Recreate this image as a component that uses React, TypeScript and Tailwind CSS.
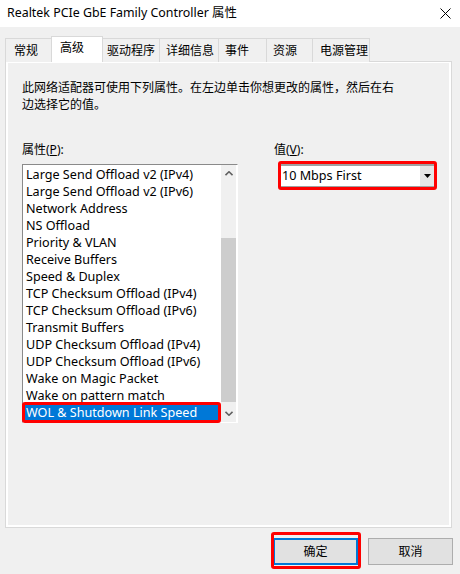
const properties = [
  "Large Send Offload v2 (IPv4)",
  "Large Send Offload v2 (IPv6)",
  "Network Address",
  "NS Offload",
  "Priority & VLAN",
  "Receive Buffers",
  "Speed & Duplex",
  "TCP Checksum Offload (IPv4)",
  "TCP Checksum Offload (IPv6)",
  "Transmit Buffers",
  "UDP Checksum Offload (IPv4)",
  "UDP Checksum Offload (IPv6)",
  "Wake on Magic Packet",
  "Wake on pattern match",
  "WOL & Shutdown Link Speed",
];

const tabs = [
  { label: "常规", w: "w-[48px]", pl: "pl-[8px]" },
  { label: "高级", w: "w-[52px]", pl: "pl-[8px]", active: true },
  { label: "驱动程序", w: "w-[58px]", pl: "pl-[4px]" },
  { label: "详细信息", w: "w-[60px]", pl: "pl-[6px]" },
  { label: "事件", w: "w-[49px]", pl: "pl-[6px]" },
  { label: "资源", w: "w-[47px]", pl: "pl-[6px]" },
  { label: "电源管理", w: "w-[58px]", pl: "pl-[7px]" },
];

const Chevron = ({ down }: { down?: boolean }) => (
  <svg width="8" height="5" viewBox="0 0 8 5">
    <path
      d={down ? "M0.5 0.8L4 4.2L7.5 0.8" : "M0.5 4.2L4 0.8L7.5 4.2"}
      fill="none"
      stroke="#606060"
      strokeWidth="1.6"
    />
  </svg>
);

export default function App() {
  return (
    <div className="w-[460px] h-[574px] bg-[#f0f0f0] flex flex-col overflow-hidden text-black font-['Segoe_UI','Noto_Sans','Noto_Sans_CJK_SC',sans-serif]">
      {/* Title bar */}
      <div className="h-[27px] shrink-0 bg-white flex items-center justify-between pl-[7px] pr-[9px] pb-[1px]">
        <span className="text-[12.4px]">Realtek PCIe GbE Family Controller 属性</span>
        <svg width="11" height="11" viewBox="0 0 11 11">
          <path d="M0.5 0.5L10.5 10.5M10.5 0.5L0.5 10.5" stroke="#000" strokeWidth="1" />
        </svg>
      </div>

      {/* Tabs */}
      <div className="flex items-end h-[26px] mt-[9px] pl-[5px] relative z-10 text-[12px]">
        {tabs.map((t) =>
          t.active ? (
            <div
              key={t.label}
              className={`${t.w} ${t.pl} h-[26px] -mx-[1px] bg-white border border-b-0 border-[#d9d9d9] flex items-center pb-[3px]`}
            >
              {t.label}
            </div>
          ) : (
            <div
              key={t.label}
              className={`${t.w} ${t.pl} h-[24px] -mr-px bg-[#f0f0f0] border border-b-0 border-[#d9d9d9] flex items-center`}
            >
              {t.label}
            </div>
          )
        )}
      </div>

      {/* Tab page */}
      <div className="w-[447px] h-[467px] ml-[5px] -mt-px border border-[#d9d9d9] shrink-0">
        <div className="h-full border-t border-x-2 border-b-2 border-white pl-[14px] pt-[16px] text-[12px]">
          <p className="leading-[17px]">
            此网络适配器可使用下列属性。在左边单击你想更改的属性，然后在右
            <br />
            边选择它的值。
          </p>

          <div className="flex mt-[28px]">
            {/* Property list */}
            <div className="w-[216px]">
              <div className="leading-[17px]">
                属性(<span className="underline">P</span>):
              </div>
              <div className="mt-[6px] h-[259px] flex border-t border-l border-[#8a8a8a] border-r border-b border-r-white border-b-white bg-white">
                <div className="w-[198px] pt-[1px] text-[12.6px]">
                  {properties.map((p, i) =>
                    i === properties.length - 1 ? (
                      <div key={p} className="relative ml-[1px] mr-[2px] h-[17px] leading-[17px] pl-[2px] bg-[#0078d7] text-white whitespace-nowrap">
                        {p}
                        <div className="absolute -left-[2px] -right-[2px] -top-[2px] -bottom-[2px] border-[3px] border-[#ff0000] rounded-[3px]" />
                      </div>
                    ) : (
                      <div key={p} className="ml-[1px] mr-[2px] h-[17px] leading-[17px] pl-[2px] whitespace-nowrap">
                        {p}
                      </div>
                    )
                  )}
                </div>
                <div className="w-[15px] bg-[#f0f0f0] flex flex-col">
                  <div className="h-[17px] flex items-center justify-center">
                    <Chevron />
                  </div>
                  <div className="flex-1 flex flex-col">
                    <div className="h-[56px]" />
                    <div className="h-[164px] bg-[#cdcdcd]" />
                  </div>
                  <div className="h-[17px] flex items-center justify-center">
                    <Chevron down />
                  </div>
                </div>
              </div>
            </div>

            {/* Value */}
            <div className="ml-[36px]">
              <div className="leading-[17px]">
                值(<span className="underline">V</span>):
              </div>
              <div className="mt-[3px] ml-[4px] w-[159px] h-[29px] border-[3px] border-[#ff0000] rounded-[3px]">
                <div className="h-full flex bg-white border-t-2 border-b border-[#a0a0a0]">
                  <div className="flex-1 pl-[1px] text-[12.6px] leading-[20px]">10 Mbps First</div>
                  <div className="w-[14px] bg-[#e5e5e5] flex items-center justify-center">
                    <svg width="7" height="4" viewBox="0 0 7 4">
                      <path d="M0 0H7L3.5 4Z" fill="#000" />
                    </svg>
                  </div>
                </div>
              </div>
            </div>
          </div>
        </div>
      </div>

      {/* Buttons */}
      <div className="flex justify-end gap-[10px] pr-[7px] mt-[10px] text-[12px]">
        <div className="relative">
          <button className="w-[85px] h-[27px] bg-[#e1e1e1] border-2 border-[#0078d7]">确定</button>
          <div className="absolute -left-[2px] -right-[3px] -top-[6px] -bottom-[4px] border-[3px] border-[#ff0000] rounded-[3px]" />
        </div>
        <button className="w-[85px] h-[27px] bg-[#e1e1e1] border border-[#adadad]">取消</button>
      </div>
    </div>
  );
}
